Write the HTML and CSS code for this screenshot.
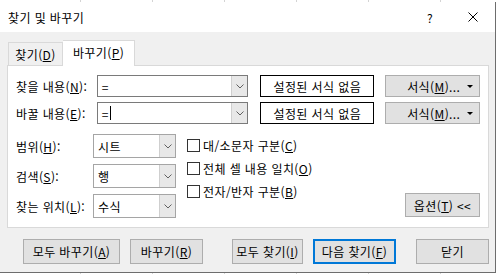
FILE: index.html
```html
<!DOCTYPE html>
<html lang="ko">
<head>
  <meta charset="UTF-8">
  <title>찾기 및 바꾸기</title>
  <link rel="stylesheet" href="styles.css">
</head>
<body>
  <div class="dialog">
    <div class="titlebar">
      <span class="title">찾기 및 바꾸기</span>
      <span class="help">?</span>
      <span class="close">
        <svg width="10" height="10" viewBox="0 0 10 10"><path d="M0.5 0.5 L9.5 9.5 M9.5 0.5 L0.5 9.5" stroke="#000" stroke-width="1"/></svg>
      </span>
    </div>
    <div class="body">
      <div class="tabs">
        <div class="tab">찾기(<u>D</u>)</div>
        <div class="tab active">바꾸기(<u>P</u>)</div>
      </div>
      <div class="panel">
        <div class="find-row">
          <div class="label">찾을 내용(<u>N</u>):</div>
          <div class="combo text-combo">
            <span class="value">=</span>
            <span class="arrow"><svg width="8" height="5" viewBox="0 0 8 5"><path d="M0.5 0.5 L4 4 L7.5 0.5" fill="none" stroke="#606060"/></svg></span>
          </div>
          <div class="preview">설정된 서식 없음</div>
          <div class="btn fmt-btn">서식(<u>M</u>)...<span class="caret"></span></div>
        </div>
        <div class="find-row">
          <div class="label">바꿀 내용(<u>E</u>):</div>
          <div class="combo text-combo">
            <span class="value">=<span class="cursor"></span></span>
            <span class="arrow"><svg width="8" height="5" viewBox="0 0 8 5"><path d="M0.5 0.5 L4 4 L7.5 0.5" fill="none" stroke="#606060"/></svg></span>
          </div>
          <div class="preview">설정된 서식 없음</div>
          <div class="btn fmt-btn">서식(<u>M</u>)...<span class="caret"></span></div>
        </div>
        <div class="options">
          <div class="selects">
            <div class="select-row">
              <div class="label small">범위(<u>H</u>):</div>
              <div class="combo select">
                <span class="value">시트</span>
                <span class="arrow"><svg width="8" height="5" viewBox="0 0 8 5"><path d="M0.5 0.5 L4 4 L7.5 0.5" fill="none" stroke="#606060"/></svg></span>
              </div>
            </div>
            <div class="select-row">
              <div class="label small">검색(<u>S</u>):</div>
              <div class="combo select">
                <span class="value">행</span>
                <span class="arrow"><svg width="8" height="5" viewBox="0 0 8 5"><path d="M0.5 0.5 L4 4 L7.5 0.5" fill="none" stroke="#606060"/></svg></span>
              </div>
            </div>
            <div class="select-row">
              <div class="label small">찾는 위치(<u>L</u>):</div>
              <div class="combo select">
                <span class="value">수식</span>
                <span class="arrow"><svg width="8" height="5" viewBox="0 0 8 5"><path d="M0.5 0.5 L4 4 L7.5 0.5" fill="none" stroke="#606060"/></svg></span>
              </div>
            </div>
          </div>
          <div class="checks">
            <div class="check"><span class="box"></span>대/소문자 구분(<u>C</u>)</div>
            <div class="check"><span class="box"></span>전체 셀 내용 일치(<u>O</u>)</div>
            <div class="check"><span class="box"></span>전자/반자 구분(<u>B</u>)</div>
          </div>
          <div class="btn opt-btn">옵션(<u>T</u>) &lt;&lt;</div>
        </div>
      </div>
      <div class="actions">
        <div class="btn act replace-all">모두 바꾸기(<u>A</u>)</div>
        <div class="btn act replace">바꾸기(<u>R</u>)</div>
        <div class="btn act find-all">모두 찾기(<u>I</u>)</div>
        <div class="btn act find-next">다음 찾기(<u>F</u>)</div>
        <div class="btn act close-btn">닫기</div>
      </div>
    </div>
  </div>
</body>
</html>
```

FILE: styles.css
```css
* {
    box-sizing: border-box;
}

html, body {
    margin: 0;
}

body {
    width: 499px;
    height: 274px;
    overflow: hidden;
    background-color: #fff;
    background-image: repeating-linear-gradient(90deg, transparent 0 71px, #d4d4d4 71px 72px);
    background-position: 9px 0;
    font-family: "Noto Sans CJK KR", "Liberation Sans", sans-serif;
    font-size: 12px;
    letter-spacing: 0.4px;
    color: #000;
}

u {
    text-underline-offset: 1px;
}

.dialog {
    margin-top: 2px;
    width: 496px;
    height: 271px;
    border-right: 1px solid #6d6d6d;
    border-bottom: 1px solid #6d6d6d;
    display: flex;
    flex-direction: column;
}

.titlebar {
    height: 30px;
    background: #fff;
    display: flex;
    align-items: center;
    padding: 0 17px 0 8px;
}

.title {
    flex: 1;
}

.help {
    width: 8px;
    text-align: center;
    margin-right: 34px;
}

.close {
    display: flex;
}

.body {
    flex: 1;
    background: #f0f0f0;
    padding: 8px 0 0 7px;
}

.tabs {
    display: flex;
    align-items: flex-end;
    height: 25px;
    padding-left: 1px;
}

.tab {
    width: 55px;
    height: 23px;
    border: 1px solid #d9d9d9;
    border-bottom: none;
    background: #f0f0f0;
    display: flex;
    align-items: center;
    justify-content: center;
}

.tab.active {
    width: 72px;
    height: 26px;
    background: #fff;
    margin-bottom: -1px;
    border-left: none;
    position: relative;
    z-index: 1;
    padding-bottom: 3px;
}

.panel {
    width: 482px;
    height: 163px;
    background: #fff;
    border: 1px solid #d9d9d9;
    padding: 9px 8px 10px;
}

.find-row {
    display: flex;
    align-items: center;
    height: 22px;
}

.find-row + .find-row {
    margin-top: 5px;
}

.label {
    width: 81px;
    white-space: nowrap;
}

.label.small {
    width: 77px;
}

.combo {
    display: flex;
    background: #fff;
    border: 1px solid #7a7a7a;
}

.combo .value {
    flex: 1;
    display: flex;
    align-items: center;
    padding-left: 4px;
}

.combo .arrow {
    width: 16px;
    display: flex;
    align-items: center;
    justify-content: center;
    background: #e8e8e8;
    border-left: 1px solid #cfcfcf;
}

.text-combo {
    width: 152px;
    height: 22px;
}

.cursor {
    display: inline-block;
    width: 1px;
    height: 14px;
    background: #000;
    margin-left: 1px;
}

.preview {
    width: 114px;
    height: 22px;
    margin-left: 12px;
    border: 1px solid #000;
    display: flex;
    align-items: center;
    justify-content: center;
}

.btn {
    background: #e1e1e1;
    border: 1px solid #adadad;
    display: flex;
    align-items: center;
    justify-content: center;
    white-space: nowrap;
}

.fmt-btn {
    width: 95px;
    height: 22px;
    margin-left: 11px;
    justify-content: flex-start;
    padding: 0 6px 0 21px;
}

.caret {
    margin-left: auto;
    width: 0;
    height: 0;
    border-left: 3px solid transparent;
    border-right: 3px solid transparent;
    border-top: 3px solid #000;
}

.options {
    display: flex;
    margin-top: 10px;
    height: 84px;
}

.selects {
    display: flex;
    flex-direction: column;
    gap: 6px;
}

.select-row {
    display: flex;
    align-items: center;
}

.select {
    width: 83px;
    height: 24px;
    border-color: #a5a5a5;
}

.checks {
    margin-left: 11px;
    display: flex;
    flex-direction: column;
}

.check {
    height: 23px;
    display: flex;
    align-items: center;
    white-space: nowrap;
}

.check .box {
    width: 13px;
    height: 13px;
    border: 1px solid #333;
    background: #fff;
    margin-right: 3px;
}

.opt-btn {
    margin-left: auto;
    align-self: flex-end;
    width: 75px;
    height: 24px;
    margin-bottom: 1px;
}

.actions {
    display: flex;
    margin-top: 11px;
    padding-left: 16px;
}

.act {
    height: 25px;
}

.replace-all {
    width: 97px;
}

.replace {
    width: 73px;
    margin-left: 10px;
}

.find-all {
    width: 71px;
    margin-left: 29px;
}

.find-next {
    width: 83px;
    margin-left: 10px;
    border: 2px solid #0078d7;
}

.close-btn {
    width: 73px;
    margin-left: 20px;
}
```
